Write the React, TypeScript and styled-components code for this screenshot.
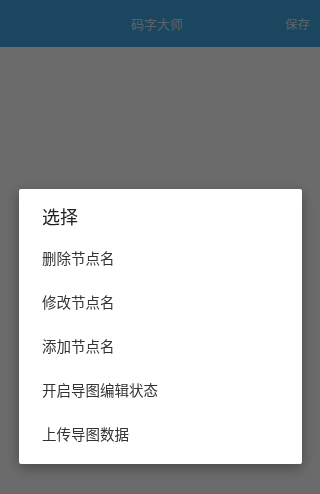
import React from "react";
import styled, { createGlobalStyle } from "styled-components";

const GlobalStyle = createGlobalStyle`
  html, body {
    margin: 0;
    padding: 0;
    width: 320px;
    height: 494px;
    overflow: hidden;
    background: #ffffff;
    font-family: Roboto, "Noto Sans CJK SC", sans-serif;
  }
`;

const Page = styled.div`
  width: 320px;
  height: 494px;
  display: flex;
  flex-direction: column;
  background: #ffffff;
`;

const Header = styled.div`
  height: 47px;
  flex-shrink: 0;
  display: grid;
  grid-template-columns: 60px 1fr 66px;
  align-items: center;
  background: #40a7e5;
  color: rgba(255, 255, 255, 0.8);
`;

const HeaderTitle = styled.div`
  grid-column: 2;
  text-align: center;
  font-size: 13px;
`;

const HeaderAction = styled.div`
  text-align: right;
  padding-right: 10px;
  font-size: 12.5px;
`;

const Scrim = styled.div`
  position: fixed;
  inset: 0;
  background: rgba(0, 0, 0, 0.58);
  display: flex;
  align-items: flex-end;
  justify-content: center;
  padding-bottom: 30px;
`;

const Dialog = styled.div`
  width: 283px;
  margin-left: 1px;
  background: #ffffff;
  border-radius: 2px;
  box-shadow: 0 4px 14px rgba(0, 0, 0, 0.35);
  padding: 18px 0 6px;
`;

const DialogTitle = styled.div`
  padding: 0 23px;
  line-height: 22px;
  font-size: 18px;
  color: #212121;
  margin-bottom: 9px;
`;

const Option = styled.div`
  height: 44px;
  line-height: 44px;
  padding: 0 23px;
  font-size: 14.5px;
  color: #333333;
`;

const options = ["删除节点名", "修改节点名", "添加节点名", "开启导图编辑状态", "上传导图数据"];

export default function App() {
  return (
    <>
      <GlobalStyle />
      <Page>
        <Header>
          <HeaderTitle>码字大师</HeaderTitle>
          <HeaderAction>保存</HeaderAction>
        </Header>
      </Page>
      <Scrim>
        <Dialog>
          <DialogTitle>选择</DialogTitle>
          {options.map((o) => (
            <Option key={o}>{o}</Option>
          ))}
        </Dialog>
      </Scrim>
    </>
  );
}
